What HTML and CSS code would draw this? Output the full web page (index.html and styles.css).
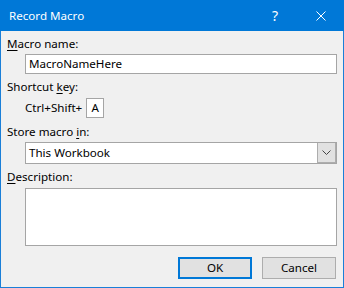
FILE: index.html
```html
<!DOCTYPE html>
<html>
<head>
<meta charset="utf-8">
<link rel="stylesheet" href="styles.css">
</head>
<body>
<div class="window">
  <div class="titlebar">
    <span class="title">Record Macro</span>
    <span class="cap-btn help">?</span>
    <span class="cap-btn close">
      <svg width="10" height="10" viewBox="0 0 10 10"><path d="M0.5 0.5 L9.5 9.5 M9.5 0.5 L0.5 9.5" stroke="#fff" stroke-width="1" fill="none"/></svg>
    </span>
  </div>
  <div class="content">
    <div class="label l1"><u>M</u>acro name:</div>
    <div class="field input1">MacroNameHere</div>
    <div class="label l2">Shortcut <u>k</u>ey:</div>
    <div class="shortcut">
      <span class="ctrl">Ctrl+Shift+</span>
      <span class="keybox">A</span>
    </div>
    <div class="label l3">Store macro <u>i</u>n:</div>
    <div class="combo">
      <span class="combo-text">This Workbook</span>
      <span class="combo-btn">
        <svg width="9" height="5" viewBox="0 0 9 5"><path d="M0.5 0.5 L4.5 4.5 L8.5 0.5" stroke="#444" stroke-width="1" fill="none"/></svg>
      </span>
    </div>
    <div class="label l4"><u>D</u>escription:</div>
    <div class="field textarea"></div>
    <div class="buttons">
      <span class="btn ok">OK</span>
      <span class="btn cancel">Cancel</span>
    </div>
  </div>
</div>
</body>
</html>
```
FILE: styles.css
```css
html, body {
  margin: 0;
  padding: 0;
  background: #f0f0f0;
}
body {
  font-family: "Noto Sans", "Open Sans", sans-serif;
  font-size: 11.6px;
  color: #000;
}
.window {
  width: 344px;
  height: 288px;
  display: flex;
  flex-direction: column;
  box-sizing: border-box;
}
.titlebar {
  height: 31px;
  flex: none;
  background: #0078d7;
  color: #fff;
  display: flex;
  align-items: center;
}
.title {
  flex: 1;
  padding-left: 9px;
  font-size: 11.6px;
  line-height: 16px;
}
.cap-btn {
  width: 46px;
  height: 31px;
  display: flex;
  align-items: center;
  justify-content: center;
}
.help {
  font-size: 14px;
  font-weight: 400;
}
.close svg {
  display: block;
}
.content {
  flex: 1;
  border: 1px solid #1a7fd8;
  border-top: none;
  background: #f0f0f0;
  padding: 5px 6px 0 6px;
  display: flex;
  flex-direction: column;
}
.label {
  height: 16px;
  line-height: 16px;
  white-space: nowrap;
}
.label u {
  text-underline-offset: 2px;
}
.field {
  margin-left: 18px;
  background: #fff;
  border: 1px solid #a5a5a5;
  box-sizing: border-box;
}
.input1 {
  height: 20px;
  margin-top: 2px;
  line-height: 18px;
  padding-left: 3px;
}
.l2 { margin-top: 5px; }
.shortcut {
  margin-top: 3px;
  margin-left: 18px;
  display: flex;
  align-items: center;
  height: 20px;
}
.ctrl {
  line-height: 20px;
}
.keybox {
  margin-left: 4px;
  width: 18px;
  height: 20px;
  box-sizing: border-box;
  border: 1px solid #a5a5a5;
  background: #fff;
  line-height: 18px;
  text-align: center;
}
.l3 { margin-top: 6px; }
.combo {
  margin-top: 2px;
  margin-left: 18px;
  height: 22px;
  box-sizing: border-box;
  border: 1px solid #a5a5a5;
  background: #fff;
  display: flex;
}
.combo-text {
  flex: 1;
  padding-left: 3px;
  line-height: 20px;
}
.combo-btn {
  width: 17px;
  background: #e1e1e1;
  border-left: 1px solid #adadad;
  border-right: 1px solid #adadad;
  border-bottom: 1px solid #adadad;
  display: flex;
  align-items: center;
  justify-content: center;
}
.l4 { margin-top: 5px; }
.textarea {
  margin-top: 3px;
  height: 58px;
}
.buttons {
  margin-top: 11px;
  display: flex;
  justify-content: flex-end;
  gap: 10px;
  padding-right: 1px;
}
.btn {
  width: 74px;
  height: 22px;
  box-sizing: border-box;
  background: #e1e1e1;
  border: 1px solid #adadad;
  text-align: center;
  line-height: 20px;
}
.ok {
  border: 2px solid #0078d7;
  line-height: 18px;
}
```
